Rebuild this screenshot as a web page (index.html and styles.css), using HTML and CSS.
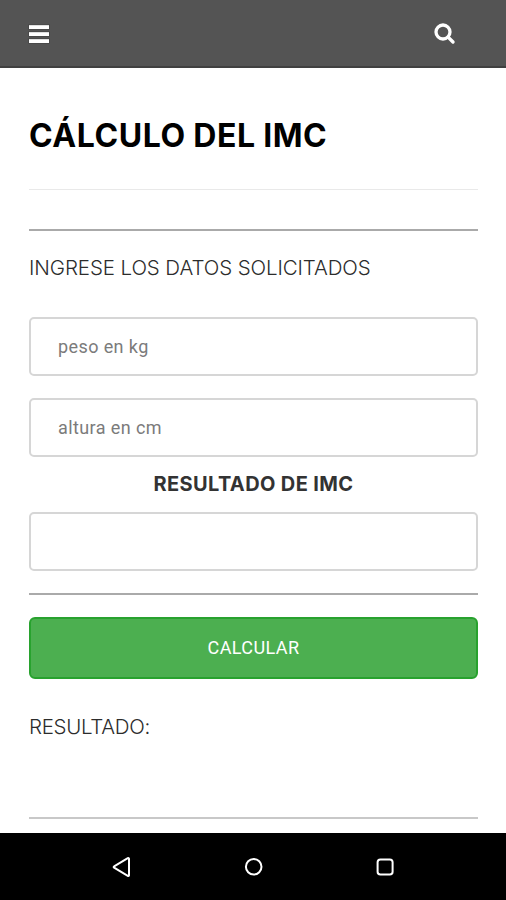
FILE: index.html
```html
<!DOCTYPE html>
<html lang="es">
<head>
<meta charset="utf-8">
<title>Cálculo del IMC</title>
<link rel="stylesheet" href="styles.css">
</head>
<body>
<header class="topbar">
  <svg class="menu" viewBox="0 0 24 20"><path d="M1.5 .7h21v4.8h-21zM1.5 7.7h21v4.8h-21zM1.5 14.7h21v4.8h-21z" fill="#fff" stroke="#303030" stroke-width=".8"/></svg>
  <svg class="search" viewBox="0 0 24 24"><circle cx="10" cy="10" r="7" stroke="#fff" stroke-width="3.3" fill="none"/><path d="m15.6 15.6 4.4 4.4" stroke="#fff" stroke-width="3.4" stroke-linecap="round"/></svg>
</header>
<main class="content">
  <h1 class="title"><span>CÁLCULO DEL IMC</span></h1>
  <hr class="rule rule-first">
  <p class="text intro"><span>INGRESE LOS DATOS SOLICITADOS</span></p>
  <input class="field" type="text" placeholder="peso en kg">
  <input class="field second" type="text" placeholder="altura en cm">
  <h2 class="label"><span>RESULTADO DE IMC</span></h2>
  <input class="field" type="text">
  <hr class="rule rule-form">
  <button class="button">CALCULAR</button>
  <p class="text result"><span>RESULTADO:</span></p>
  <hr class="rule rule-last">
</main>
<nav class="navbar">
  <svg viewBox="0 0 24 24"><path d="M19 3.8v16.4a.8.8 0 0 1-1.2.7L4.1 12.7a.8.8 0 0 1 0-1.4l13.7-8.2a.8.8 0 0 1 1.2.7z"/></svg>
  <svg viewBox="0 0 24 24"><circle cx="11.7" cy="11.8" r="7.8"/></svg>
  <svg viewBox="0 0 24 24"><rect x="4.6" y="4.5" width="15" height="15" rx="2.8"/></svg>
</nav>
</body>
</html>
```
FILE: styles.css
```css
* { box-sizing: border-box; }
body { margin: 0; height: 900px; display: flex; flex-direction: column; overflow: hidden; background: #fff; font-family: Inter, "Liberation Sans", sans-serif; }
.topbar { height: 68px; flex: none; display: flex; justify-content: space-between; align-items: center; padding: 2px 49px 0 27px; background: #545454; border-bottom: 2px solid #404040; }
.menu { width: 24px; height: 20px; }
.search { width: 24px; height: 24px; }
.content { height: 765px; flex: none; padding: 0 28px 0 29px; display: flex; flex-direction: column; }
.title { margin: 0; height: 122px; flex: none; padding-top: 48px; border-bottom: 1px solid #e9e9e9; font-size: 32px; line-height: 40px; font-weight: 700; color: #000; white-space: nowrap; letter-spacing: .55px; word-spacing: -.5px; }
.rule { margin: 0; height: 2px; flex: none; border: 0; background: #aaa; }
.rule-first { margin-top: 39px; }
.text { margin: 0; font-size: 20.5px; line-height: 30px; font-weight: 300; color: #2c2c2c; white-space: nowrap; letter-spacing: -.1px; }
.intro { padding-top: 22px; height: 86px; flex: none; }
.field { display: block; width: 100%; height: 59px; flex: none; border: 2px solid #d6d6d6; border-radius: 5px; background: #fff; padding: 0 27px; font: 18px Roboto, sans-serif; letter-spacing: .4px; }
.field::placeholder { color: #7b7b7b; opacity: 1; }
.second { margin-top: 22px; }
.label { margin: 0; height: 55px; flex: none; padding-top: 12px; text-align: center; font-size: 20px; line-height: 30px; font-weight: 700; color: #333; white-space: nowrap; letter-spacing: .38px; }
.rule-form { margin-top: 22px; }
.button { margin-top: 22px; width: 100%; height: 62px; flex: none; border: 2px solid #28a22e; border-radius: 6px; background: #4caf50; color: #fff; font: 18px Roboto, sans-serif; letter-spacing: .4px; padding: 0 0 2px; }
.result { padding-top: 33px; height: 138px; flex: none; letter-spacing: -.3px; }
.rule-last { background: #c8c8c8; }
.navbar { flex: 1; background: #000; display: flex; justify-content: space-between; align-items: center; padding: 0 109px 0 110px; }
.navbar svg { width: 24px; height: 24px; fill: none; stroke: #fff; stroke-width: 2; }
```
